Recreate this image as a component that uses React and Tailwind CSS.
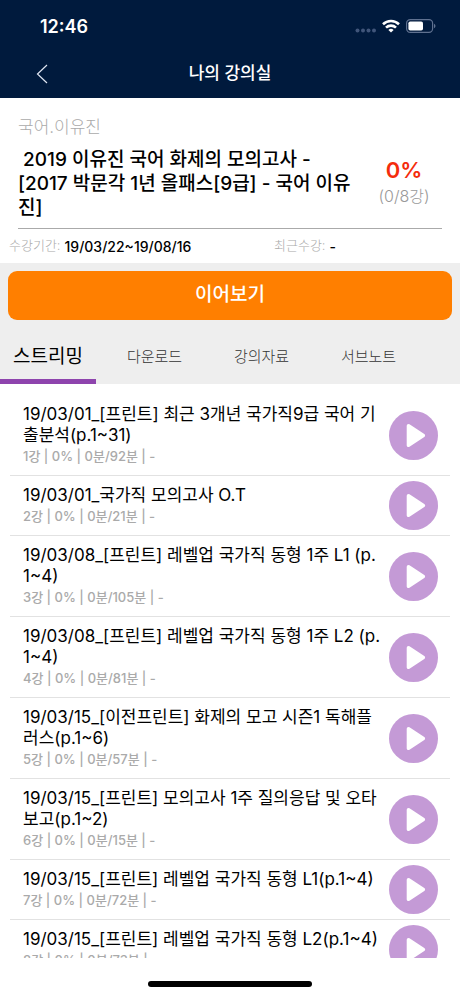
const course = {
  subject: "국어.이유진",
  title: " 2019 이유진 국어 화제의 모의고사 - [2017 박문각 1년 올패스[9급] - 국어 이유진]",
  progress: "0%",
  count: "(0/8강)",
  period: "19/03/22~19/08/16",
  recent: "-",
};

const tabs = [
  { id: "streaming", label: "스트리밍" },
  { id: "download", label: "다운로드" },
  { id: "material", label: "강의자료" },
  { id: "note", label: "서브노트" },
];

const lectures = [
  { no: 1, title: "19/03/01_[프린트] 최근 3개년 국가직9급 국어 기출분석(p.1~31)", time: "0분/92분" },
  { no: 2, title: "19/03/01_국가직 모의고사 O.T", time: "0분/21분" },
  { no: 3, title: "19/03/08_[프린트] 레벨업 국가직 동형 1주 L1 (p.1~4)", time: "0분/105분" },
  { no: 4, title: "19/03/08_[프린트] 레벨업 국가직 동형 1주 L2 (p.1~4)", time: "0분/81분" },
  { no: 5, title: "19/03/15_[이전프린트] 화제의 모고 시즌1 독해플러스(p.1~6)", time: "0분/57분" },
  { no: 6, title: "19/03/15_[프린트] 모의고사 1주 질의응답 및 오타보고(p.1~2)", time: "0분/15분" },
  { no: 7, title: "19/03/15_[프린트] 레벨업 국가직 동형 L1(p.1~4)", time: "0분/72분" },
  { no: 8, title: "19/03/15_[프린트] 레벨업 국가직 동형 L2(p.1~4)", time: "0분/73분" },
];

function StatusBar() {
  return (
    <div className="flex items-center justify-between h-[52px] pl-10 pr-6 text-white">
      <span className="text-[18px] font-semibold">12:46</span>
      <div className="flex items-center gap-[6px]">
        <svg width="22" height="14" viewBox="0 0 22 14" fill="#40557a">
          <circle cx="3.5" cy="11.5" r="2" />
          <circle cx="9" cy="11.5" r="2" />
          <circle cx="14.5" cy="11.5" r="2" />
          <circle cx="20" cy="11.5" r="2" />
        </svg>
        <svg width="18" height="14" viewBox="0 0 18 14" fill="none" stroke="#fff" strokeWidth="2.6">
          <path d="M1 5.2 A11.6 11.6 0 0 1 17 5.2" />
          <path d="M4 8.6 A7.2 7.2 0 0 1 14 8.6" />
          <path d="M9 13.6 L6.4 11 A3.8 3.8 0 0 1 11.6 11 Z" fill="#fff" stroke="none" />
        </svg>
        <svg width="30" height="14" viewBox="0 0 30 14" fill="none">
          <rect x="0.6" y="0.6" width="26" height="12.8" rx="3.6" stroke="#5f7190" strokeWidth="1.2" />
          <rect x="2.4" y="2.4" width="14.6" height="9.2" rx="1.8" fill="#fff" />
          <path d="M28 4.8 C30 5.6 30 8.4 28 9.2 Z" fill="#5f7190" />
        </svg>
      </div>
    </div>
  );
}

function PlayButton({ label }) {
  return (
    <button type="button" aria-label={label} className="shrink-0 self-center">
      <svg width="49" height="49" viewBox="0 0 49 49">
        <circle cx="24.5" cy="24.5" r="24.5" fill="#c49ad6" />
        <path
          d="M19.5 14.8 L34.3 24.5 L19.5 34.2 Z"
          fill="#fff"
          stroke="#fff"
          strokeWidth="3.6"
          strokeLinejoin="round"
        />
      </svg>
    </button>
  );
}

export default function App() {
  return (
    <div className="flex flex-col h-screen overflow-hidden bg-white text-black font-['Inter','Noto_Sans_CJK_KR',sans-serif]">
      <header className="shrink-0 bg-[#001a3d] text-white">
        <StatusBar />
        <div className="grid grid-cols-[1fr_auto_1fr] items-center h-[46px] px-9 pb-[2px]">
          <button type="button" aria-label="뒤로" className="justify-self-start">
            <svg width="12" height="20" viewBox="0 0 12 20" fill="none" stroke="#dfe6f2" strokeWidth="1.2">
              <path d="M11 1 L1.5 10 L11 19" />
            </svg>
          </button>
          <h1 className="text-[17px] font-medium">나의 강의실</h1>
        </div>
      </header>

      {/* Course summary */}
      <section className="shrink-0">
        <div className="mx-[18px] pt-[18px] pb-2 border-b border-[#aaaaaa]">
          <p className="text-[17px] leading-[22px] font-light text-[#aaaaaa]">{course.subject}</p>
          <div className="flex items-start justify-between pt-[10px]">
            <h2 className="w-[342px] text-[19px] leading-6 font-medium whitespace-pre-wrap">
              {course.title}
            </h2>
            <div className="w-[76px] pt-2 text-center">
              <p className="text-[22px] leading-7 font-semibold text-[#f42c0c]">{course.progress}</p>
              <p className="text-base leading-6 font-light text-[#999999]">{course.count}</p>
            </div>
          </div>
        </div>
        <dl className="grid grid-cols-[265px_1fr] h-[34px] items-center px-[9px] text-[13px]">
          <div className="flex items-center gap-1">
            <dt className="font-light text-[#aaaaaa]">수강기간:</dt>
            <dd className="text-[14px] font-medium">{course.period}</dd>
          </div>
          <div className="flex items-center gap-1">
            <dt className="font-light text-[#aaaaaa]">최근수강:</dt>
            <dd className="text-[14px] font-medium">{course.recent}</dd>
          </div>
        </dl>
      </section>

      {/* Continue + tabs */}
      <section className="shrink-0 bg-[#eeeeee]">
        <div className="px-2 pt-2">
          <button type="button" className="w-full h-[49px] rounded-[9px] bg-[#ff7f00] text-white text-[19px] font-medium">
            이어보기
          </button>
        </div>
        <div role="tablist" className="flex h-16 text-[15px]">
          {tabs.map((tab, i) => (
            <button
              key={tab.id}
              type="button"
              role="tab"
              aria-selected={i === 0}
              className={
                i === 0
                  ? "w-24 mr-[5px] pt-4 border-b-5 border-[#8e44ad] text-[19px]"
                  : "w-[107px] pt-4 pb-[5px] font-light text-[#333333]"
              }
            >
              {tab.label}
            </button>
          ))}
        </div>
      </section>

      {/* Lecture list */}
      <ul className="flex-1 min-h-0 overflow-hidden pt-[11px]">
        {lectures.map((lecture) => (
          <li key={lecture.no} className="flex mx-[10px] pl-[13px] pr-3 border-b border-[#e2e2e2]">
            <div className="flex-1 py-[9px] pr-2">
              <p className="text-[17px] leading-[21px] break-all">{lecture.title}</p>
              <p className="text-[13px] leading-5 font-medium text-[#aaaaaa]">
                {lecture.no}강 | 0% | {lecture.time} | -
              </p>
            </div>
            <PlayButton label={`${lecture.no}강 재생`} />
          </li>
        ))}
      </ul>

      <footer className="shrink-0 flex justify-center h-[38px] pt-[23px]">
        <div className="w-[164px] h-[6px] rounded-full bg-black" />
      </footer>
    </div>
  );
}
